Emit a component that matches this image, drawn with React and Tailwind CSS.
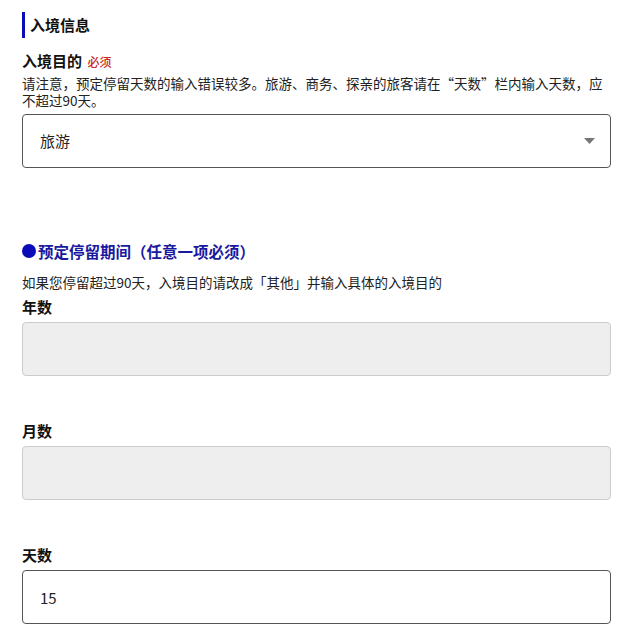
import { useState } from 'react';

const font = { fontFamily: '"Noto Sans CJK SC", "Noto Sans", sans-serif' };

function Label({ children, className = '' }) {
  return (
    <div className={`text-[15px] font-bold leading-[20px] text-[#111] ${className}`}>{children}</div>
  );
}

function DisabledBox({ className = '' }) {
  return (
    <div className={`h-[54px] rounded-[4px] border border-[#cccccc] bg-[#eeeeee] ${className}`} />
  );
}

export default function App() {
  const [days, setDays] = useState('15');

  return (
    <div className="min-h-[643px] bg-white pl-[22px] pr-[8px] text-[#222]" style={font}>
      {/* 入境信息 */}
      <h2 className="pt-[12px]">
        <span className="block border-l-[3px] border-[#0b0bb8] pl-[5px] text-[15px] font-bold leading-[26px] text-[#111]">
          入境信息
        </span>
      </h2>

      <Label className="mt-[13px]">
        入境目的 <span className="ml-[2px] text-[12px] font-medium text-[#c8281e]">必须</span>
      </Label>
      <p className="mt-[3px] text-[13.5px] leading-[17px] text-[#222]">
        请注意，预定停留天数的输入错误较多。旅游、商务、探亲的旅客请在“天数”栏内输入天数，应不超过90天。
      </p>
      <div className="mt-[5px] flex h-[54px] items-center justify-between rounded-[4px] border border-[#555] bg-white pl-[17px] pr-[15px]">
        <span className="text-[15px] text-[#222]">旅游</span>
        <svg width="11" height="6" viewBox="0 0 11 6">
          <path d="M0 0h11L5.5 6z" fill="#777" />
        </svg>
      </div>

      {/* 预定停留期间 */}
      <div className="mt-[72px] flex items-center text-[15.5px] font-bold leading-[22px] text-[#1a1aa0]">
        <span className="mr-[2px] inline-block h-[14px] w-[14px] rounded-full bg-[#0b0bb8]" />
        预定停留期间（任意一项必须）
      </div>
      <p className="mt-[12px] text-[13.5px] leading-[17px] text-[#222]">
        如果您停留超过90天，入境目的请改成「其他」并输入具体的入境目的
      </p>

      <Label className="mt-[6px]">年数</Label>
      <DisabledBox className="mt-[5px]" />

      <Label className="mt-[45px]">月数</Label>
      <DisabledBox className="mt-[5px]" />

      <Label className="mt-[45px]">天数</Label>
      <input
        value={days}
        onChange={(e) => setDays(e.target.value)}
        className="mt-[5px] block h-[54px] w-full rounded-[4px] border border-[#555] bg-white pl-[17px] text-[15px] text-[#222] outline-none"
        style={font}
      />
    </div>
  );
}
